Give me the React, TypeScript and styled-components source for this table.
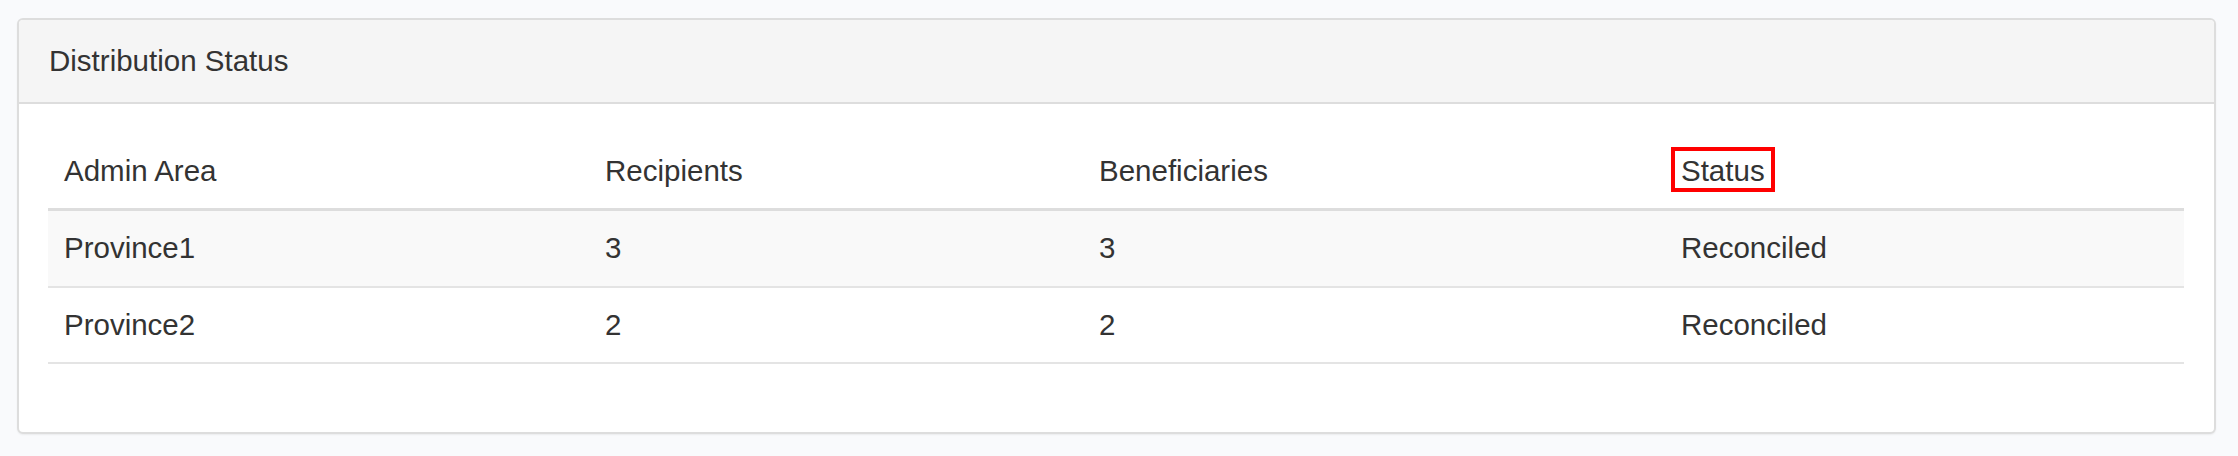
import React from "react";
import styled, { createGlobalStyle } from "styled-components";

const GlobalStyle = createGlobalStyle`
  html, body {
    margin: 0;
    padding: 0;
    background: #f9fafc;
  }
  body {
    font-family: "Liberation Sans", Arial, Helvetica, sans-serif;
    color: #333333;
  }
`;

const Page = styled.div`
  padding: 18px 22px 20px 17px;
`;

const Panel = styled.section`
  background: #ffffff;
  border: 2px solid #dddddd;
  border-radius: 6px;
  box-shadow: 0 1px 2px rgba(0, 0, 0, 0.06);
  overflow: hidden;
`;

const PanelHeader = styled.header`
  background: #f5f5f5;
  border-bottom: 2px solid #dddddd;
  padding: 20px 31px 20px 30px;
`;

const PanelTitle = styled.h3`
  margin: 0;
  font-size: 29.5px;
  line-height: 42px;
  font-weight: 400;
  color: #333333;
`;

const PanelBody = styled.div`
  padding: 29.5px 30px 30px 29px;
`;

const Table = styled.table`
  width: 100%;
  table-layout: fixed;
  border-collapse: collapse;
  margin-bottom: 38px;
  font-size: 29.5px;
  line-height: 42.5px;
  color: #333333;
`;

const Col = styled.col<{ $w?: number }>`
  width: ${(p) => (p.$w ? `${p.$w}px` : "auto")};
`;

const HeadCell = styled.th`
  text-align: left;
  font-weight: 400;
  padding: 16px 16px;
  border-bottom: 3px solid #dddddd;
`;

const Row = styled.tr<{ $striped?: boolean }>`
  background: ${(p) => (p.$striped ? "#f9f9f9" : "#ffffff")};
  border-bottom: 2px solid #e4e4e4;
`;

const Cell = styled.td`
  padding: 16px 16px;
  text-align: left;
`;

const Highlight = styled.span`
  position: relative;
  &::after {
    content: "";
    position: absolute;
    left: -10px;
    right: -10px;
    top: -7px;
    bottom: -5px;
    border: 4px solid #ff0000;
    pointer-events: none;
  }
`;

const rows = [
  { area: "Province1", recipients: 3, beneficiaries: 3, status: "Reconciled" },
  { area: "Province2", recipients: 2, beneficiaries: 2, status: "Reconciled" },
];

export default function App() {
  return (
    <>
      <GlobalStyle />
      <Page>
        <Panel>
          <PanelHeader>
            <PanelTitle>Distribution Status</PanelTitle>
          </PanelHeader>
          <PanelBody>
            <Table>
              <colgroup>
                <Col $w={541} />
                <Col $w={494} />
                <Col $w={582} />
                <Col />
              </colgroup>
              <thead>
                <tr>
                  <HeadCell>Admin Area</HeadCell>
                  <HeadCell>Recipients</HeadCell>
                  <HeadCell>Beneficiaries</HeadCell>
                  <HeadCell>
                    <Highlight>Status</Highlight>
                  </HeadCell>
                </tr>
              </thead>
              <tbody>
                {rows.map((r, i) => (
                  <Row key={r.area} $striped={i % 2 === 0}>
                    <Cell>{r.area}</Cell>
                    <Cell>{r.recipients}</Cell>
                    <Cell>{r.beneficiaries}</Cell>
                    <Cell>{r.status}</Cell>
                  </Row>
                ))}
              </tbody>
            </Table>
          </PanelBody>
        </Panel>
      </Page>
    </>
  );
}
